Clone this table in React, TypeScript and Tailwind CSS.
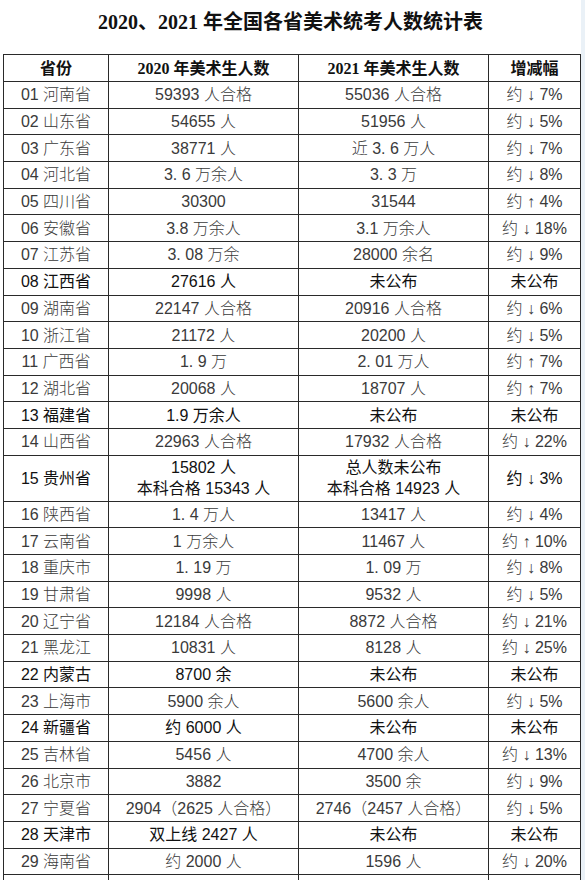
import React from "react";

type Row = {
  p: string;
  a: React.ReactNode;
  b: React.ReactNode;
  c: string;
  bold?: boolean;
  tall?: boolean;
};

const rows: Row[] = [
  { p: "01 河南省", a: "59393 人合格", b: "55036 人合格", c: "约 ↓ 7%" },
  { p: "02 山东省", a: "54655 人", b: "51956 人", c: "约 ↓ 5%" },
  { p: "03 广东省", a: "38771 人", b: "近 3. 6 万人", c: "约 ↓ 7%" },
  { p: "04 河北省", a: "3. 6 万余人", b: "3. 3 万", c: "约 ↓ 8%" },
  { p: "05 四川省", a: "30300", b: "31544", c: "约 ↑ 4%" },
  { p: "06 安徽省", a: "3.8 万余人", b: "3.1 万余人", c: "约 ↓ 18%" },
  { p: "07 江苏省", a: "3. 08 万余", b: "28000 余名", c: "约 ↓ 9%" },
  { p: "08 江西省", a: "27616 人", b: "未公布", c: "未公布", bold: true },
  { p: "09 湖南省", a: "22147 人合格", b: "20916 人合格", c: "约 ↓ 6%" },
  { p: "10 浙江省", a: "21172 人", b: "20200 人", c: "约 ↓ 5%" },
  { p: "11 广西省", a: "1. 9 万", b: "2. 01 万人", c: "约 ↑ 7%" },
  { p: "12 湖北省", a: "20068 人", b: "18707 人", c: "约 ↑ 7%" },
  { p: "13 福建省", a: "1.9 万余人", b: "未公布", c: "未公布", bold: true },
  { p: "14 山西省", a: "22963 人合格", b: "17932 人合格", c: "约 ↓ 22%" },
  {
    p: "15 贵州省",
    a: (
      <>
        <span>15802 人</span>
        <span>本科合格 15343 人</span>
      </>
    ),
    b: (
      <>
        <span>总人数未公布</span>
        <span>本科合格 14923 人</span>
      </>
    ),
    c: "约 ↓ 3%",
    tall: true,
  },
  { p: "16 陕西省", a: "1. 4 万人", b: "13417 人", c: "约 ↓ 4%" },
  { p: "17 云南省", a: "1 万余人", b: "11467 人", c: "约 ↑ 10%" },
  { p: "18 重庆市", a: "1. 19 万", b: "1. 09 万", c: "约 ↓ 8%" },
  { p: "19 甘肃省", a: "9998 人", b: "9532 人", c: "约 ↓ 5%" },
  { p: "20 辽宁省", a: "12184 人合格", b: "8872 人合格", c: "约 ↓ 21%" },
  { p: "21 黑龙江", a: "10831 人", b: "8128 人", c: "约 ↓ 25%" },
  { p: "22 内蒙古", a: "8700 余", b: "未公布", c: "未公布", bold: true },
  { p: "23 上海市", a: "5900 余人", b: "5600 余人", c: "约 ↓ 5%" },
  { p: "24 新疆省", a: "约 6000 人", b: "未公布", c: "未公布", bold: true },
  { p: "25 吉林省", a: "5456 人", b: "4700 余人", c: "约 ↓ 13%" },
  { p: "26 北京市", a: "3882", b: "3500 余", c: "约 ↓ 9%" },
  { p: "27 宁夏省", a: "2904（2625 人合格）", b: "2746（2457 人合格）", c: "约 ↓ 5%" },
  { p: "28 天津市", a: "双上线 2427 人", b: "未公布", c: "未公布", bold: true },
  { p: "29 海南省", a: "约 2000 人", b: "1596 人", c: "约 ↓ 20%" },
];

const serif = { fontFamily: "'Liberation Serif', 'Noto Sans CJK SC', serif" };
const sans = { fontFamily: "'Liberation Sans', 'Noto Sans CJK SC', sans-serif" };

function Cell({ children }: { children: React.ReactNode }) {
  return (
    <div className="flex flex-col items-center justify-center leading-[21px] border-r border-[#2a2a2a] whitespace-nowrap">
      {children}
    </div>
  );
}

export default function App() {
  return (
    <div className="w-[585px] h-[880px] overflow-hidden bg-white flex">
      <div className="w-[581px] shrink-0 flex flex-col">
        <div
          className="h-[54px] shrink-0 flex items-start justify-center pt-[9px] text-[20px] font-bold text-[#111] leading-[26px]"
          style={serif}
        >
          2020、2021 年全国各省美术统考人数统计表
        </div>
        <div className="ml-[3px] w-[578px] shrink-0 border-l border-t border-[#2a2a2a] flex flex-col">
          <div
            className="grid shrink-0 grid-cols-[105px_190px_190px_92px] h-[27px] border-b border-[#2a2a2a] text-[16px] font-bold text-[#111]"
            style={serif}
          >
            <Cell>省份</Cell>
            <Cell>2020 年美术生人数</Cell>
            <Cell>2021 年美术生人数</Cell>
            <Cell>增减幅</Cell>
          </div>
          {rows.map((r) => (
            <div
              key={r.p}
              className={`grid shrink-0 grid-cols-[105px_190px_190px_92px] border-b border-[#2a2a2a] text-[16px] ${
                r.tall ? "h-[46px]" : "h-[26.7px]"
              } ${r.bold || r.tall ? "text-[#111] font-normal" : "text-[#3a3a3a] font-light"}`}
              style={sans}
            >
              <Cell>{r.p}</Cell>
              <Cell>{r.a}</Cell>
              <Cell>{r.b}</Cell>
              <Cell>{r.c}</Cell>
            </div>
          ))}
          <div className="grid shrink-0 grid-cols-[105px_190px_190px_92px] h-[26.7px]">
            <Cell>{""}</Cell>
            <Cell>{""}</Cell>
            <Cell>{""}</Cell>
            <Cell>{""}</Cell>
          </div>
        </div>
      </div>
      <div className="flex-1 bg-[#eaf1f7]" />
    </div>
  );
}
